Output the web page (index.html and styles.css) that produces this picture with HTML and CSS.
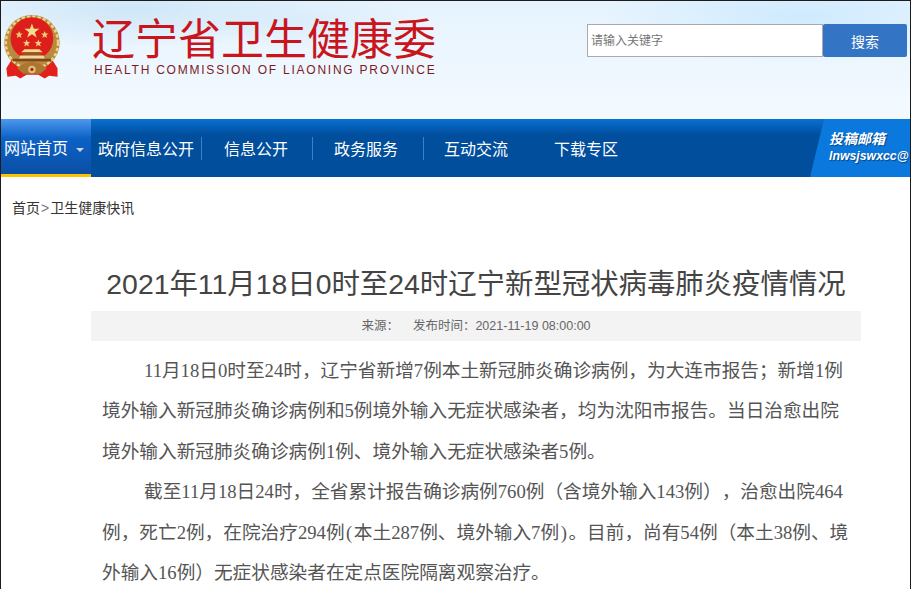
FILE: index.html
```html
<!DOCTYPE html>
<html lang="zh-CN">
<head>
    <meta charset="UTF-8">
    <title>2021年11月18日0时至24时辽宁新型冠状病毒肺炎疫情情况</title>
    <link rel="stylesheet" href="styles.css">
</head>
<body>
    <div class="page">
        <header class="top">
            <svg class="emblem" width="60" height="64" viewBox="2 0 56 60">
                <path d="M10 42 L5 50 L6 58 L14 57 L18 59.5 L24 56 L35 56 L41 59.5 L45 57 L53 58 L53 50 L48 42 Z" fill="#e3211c"/>
                <circle cx="29" cy="26" r="26" fill="#b98a3e"/>
                <circle cx="29" cy="26" r="24.5" fill="none" stroke="#ecd28f" stroke-width="2.4" stroke-dasharray="3 2"/>
                <circle cx="29" cy="22" r="20" fill="#dd1f1b"/>
                <polygon points="29,8 30.8,13 36,13 31.8,16.2 33.4,21 29,18 24.6,21 26.2,16.2 22,13 27.2,13" fill="#f6dc8a"/>
                <polygon points="17,15 18,17.4 20.4,17.4 18.5,19 19.2,21.6 17,20.2 14.8,21.6 15.5,19 13.6,17.4 16,17.4" fill="#f0cd70"/>
                <polygon points="41,15 42,17.4 44.4,17.4 42.5,19 43.2,21.6 41,20.2 38.8,21.6 39.5,19 37.6,17.4 40,17.4" fill="#f0cd70"/>
                <polygon points="24,23 25,25.4 27.4,25.4 25.5,27 26.2,29.6 24,28.2 21.8,29.6 22.5,27 20.6,25.4 23,25.4" fill="#f0cd70"/>
                <polygon points="35,23 36,25.4 38.4,25.4 36.5,27 37.2,29.6 35,28.2 32.8,29.6 33.5,27 31.6,25.4 34,25.4" fill="#f0cd70"/>
                <path d="M22 32 H36 L39 35 H19 Z" fill="#f2d893"/>
                <rect x="21" y="35" width="16" height="3" fill="#8f5a22"/>
                <path d="M18 38 H40 L41 41 H17 Z" fill="#f0d898"/>
                <rect x="11" y="41" width="36" height="2.5" fill="#7a4a1c"/>
                <path d="M15 50 Q29 38 43 50 L37 55 H21 Z" fill="#a9772f"/>
                <circle cx="29" cy="51" r="3.5" fill="#e3c078"/>
                <circle cx="29" cy="51" r="1.5" fill="#b02018"/>
            </svg>
            <div class="brand">
                <div class="brand-cn">辽宁省卫生健康委</div>
                <div class="brand-en">HEALTH COMMISSION OF LIAONING PROVINCE</div>
            </div>
            <form class="search">
                <input class="search-input" type="text" placeholder="请输入关键字">
                <button class="search-btn" type="button">搜索</button>
            </form>
        </header>

        <nav class="nav">
            <a class="nav-item home">网站首页<span class="caret"></span></a>
            <a class="nav-item">政府信息公开</a>
            <a class="nav-item">信息公开</a>
            <a class="nav-item">政务服务</a>
            <a class="nav-item">互动交流</a>
            <a class="nav-item">下载专区</a>
            <div class="mail">
                <b>投稿邮箱</b>
                <i>lnwsjswxcc@</i>
            </div>
        </nav>

        <div class="crumb">首页<span class="gt">&gt;</span>卫生健康快讯</div>

        <main class="article">
            <h1>2021年11月18日0时至24时辽宁新型冠状病毒肺炎疫情情况</h1>
            <div class="meta"><span>来源：</span><span>发布时间：2021-11-19 08:00:00</span></div>
            <div class="content">
                <p>11月18日0时至24时，辽宁省新增7例本土新冠肺炎确诊病例，为大连市报告；新增1例<br>境外输入新冠肺炎确诊病例和5例境外输入无症状感染者，均为沈阳市报告。当日治愈出院<br>境外输入新冠肺炎确诊病例1例、境外输入无症状感染者5例。</p>
                <p>截至11月18日24时，全省累计报告确诊病例760例（含境外输入143例），治愈出院464<br>例，死亡2例，在院治疗294例<span class="half">(</span>本土287例、境外输入7例<span class="half">)</span>。目前，尚有54例（本土38例、境<br>外输入16例）无症状感染者在定点医院隔离观察治疗。</p>
            </div>
        </main>
    </div>
</body>
</html>
```

FILE: styles.css
```css
html, body {
    margin: 0;
    height: 100%;
    overflow: hidden;
    background: #fff;
}

.page {
    height: 100%;
    box-sizing: border-box;
    border: 1px solid #1c1c1c;
    border-bottom: none;
    overflow: hidden;
    font-family: "Liberation Sans", "Noto Sans CJK SC", sans-serif;
    color: #333;
}

/* header */
.top {
    height: 118px;
    box-sizing: border-box;
    display: flex;
    align-items: flex-start;
    padding: 14px 3px 0 2px;
    background:
        radial-gradient(ellipse 180px 40px at 130px 8px, rgba(196, 225, 245, 0.7), transparent),
        radial-gradient(ellipse 200px 50px at 800px 15px, rgba(200, 232, 255, 0.8), transparent),
        radial-gradient(ellipse 120px 30px at 300px 20px, rgba(205, 230, 248, 0.5), transparent),
        linear-gradient(#e6f3fd, #f2f9ff 85%);
}

.emblem {
    flex: none;
}

.brand {
    margin: 2px 0 0 29px;
    width: 346px;
}

.brand-cn {
    font-size: 43px;
    line-height: 46px;
    color: #c9151c;
    white-space: nowrap;
}

.brand-en {
    font-size: 12px;
    line-height: 14px;
    margin-left: 2px;
    letter-spacing: 1.77px;
    color: #7c1a22;
    white-space: nowrap;
}

.search {
    display: flex;
    margin: 9px 0 0 auto;
}

.search-input {
    width: 236px;
    height: 33px;
    box-sizing: border-box;
    border: 1px solid #aaa;
    padding: 0 3px;
    font: 12px "Liberation Sans", "Noto Sans CJK SC", sans-serif;
}

.search-input::placeholder {
    color: #757575;
}

.search-btn {
    width: 84px;
    height: 33px;
    border: none;
    border-radius: 2px;
    background: #3375c4;
    color: #fff;
    font: 14px "Liberation Sans", "Noto Sans CJK SC", sans-serif;
}

/* nav */
.nav {
    height: 58px;
    display: flex;
    position: relative;
    align-items: center;
    color: #fff;
    font-size: 16px;
    background: linear-gradient(#0a6fd3, #004e9c 28%, #004e9c);
}

.nav-item {
    width: 110px;
    box-sizing: border-box;
    position: relative;
    top: 1px;
    text-align: center;
    line-height: 23px;
    white-space: nowrap;
}

.nav-item::after {
    content: "";
    position: absolute;
    top: -1px;
    right: 0;
    width: 1px;
    height: 23px;
    background: #3a7fd0;
}

.nav-item:nth-child(2)::after {
    right: -1px;
}

.nav-item:nth-child(3)::after {
    right: -2px;
}

.nav-item:nth-child(4)::after {
    right: -3px;
}

.nav-item:nth-child(5)::after,
.nav-item:nth-child(6)::after {
    display: none;
}

.nav-item.home {
    width: 90px;
    height: 58px;
    top: 0;
    line-height: 60px;
    text-align: left;
    padding-left: 3px;
    border-bottom: 3px solid #fdc200;
    background: linear-gradient(#4d98ec, #0c62c6 35%, #0a4fa6);
}

.nav-item.home::after {
    display: none;
}

.caret {
    display: inline-block;
    margin-left: 8px;
    vertical-align: middle;
    border: 4px solid transparent;
    border-top-color: #c9d6e8;
    border-bottom: none;
}

.mail {
    position: absolute;
    top: 0;
    right: 0;
    bottom: 0;
    width: 100px;
    box-sizing: border-box;
    padding: 11px 0 0 19px;
    overflow: hidden;
    white-space: nowrap;
    background: #0a78dc;
    clip-path: polygon(14px 0, 100% 0, 100% 100%, 0 100%);
    text-shadow: 1px 1px 1px #04468c;
}

.mail b {
    display: block;
    font-size: 14px;
    font-style: italic;
    line-height: 18px;
}

.mail i {
    display: block;
    font-size: 12.3px;
    font-weight: bold;
    line-height: 16px;
}

/* article */
.crumb {
    padding: 22px 0 0 11px;
    font-size: 14px;
    line-height: 18px;
    color: #333;
}

.gt {
    margin: 0 1px;
    color: #777;
}

.article {
    margin: 0 49px 0 90px;
}

h1 {
    margin: 47px 0 0;
    font-size: 28.4px;
    line-height: 40px;
    font-weight: normal;
    text-align: center;
    color: #444;
    white-space: nowrap;
}

.meta {
    height: 30px;
    margin-top: 7px;
    display: flex;
    justify-content: center;
    gap: 14px;
    background: #f3f3f3;
    font-size: 12.5px;
    line-height: 30px;
    color: #666;
}

.content {
    margin: 10px 0 0 11px;
    font-family: "Liberation Serif", "Noto Sans CJK SC", serif;
    font-size: 18.67px;
    line-height: 40.4px;
    color: #555;
    white-space: nowrap;
    text-spacing-trim: space-all;
}

.content p {
    margin: 0;
    text-indent: 42px;
}

/* half width brackets take 0.5em in the original font */
.half {
    display: inline-block;
    width: 0.5em;
    text-indent: 0;
    text-align: center;
}
```
